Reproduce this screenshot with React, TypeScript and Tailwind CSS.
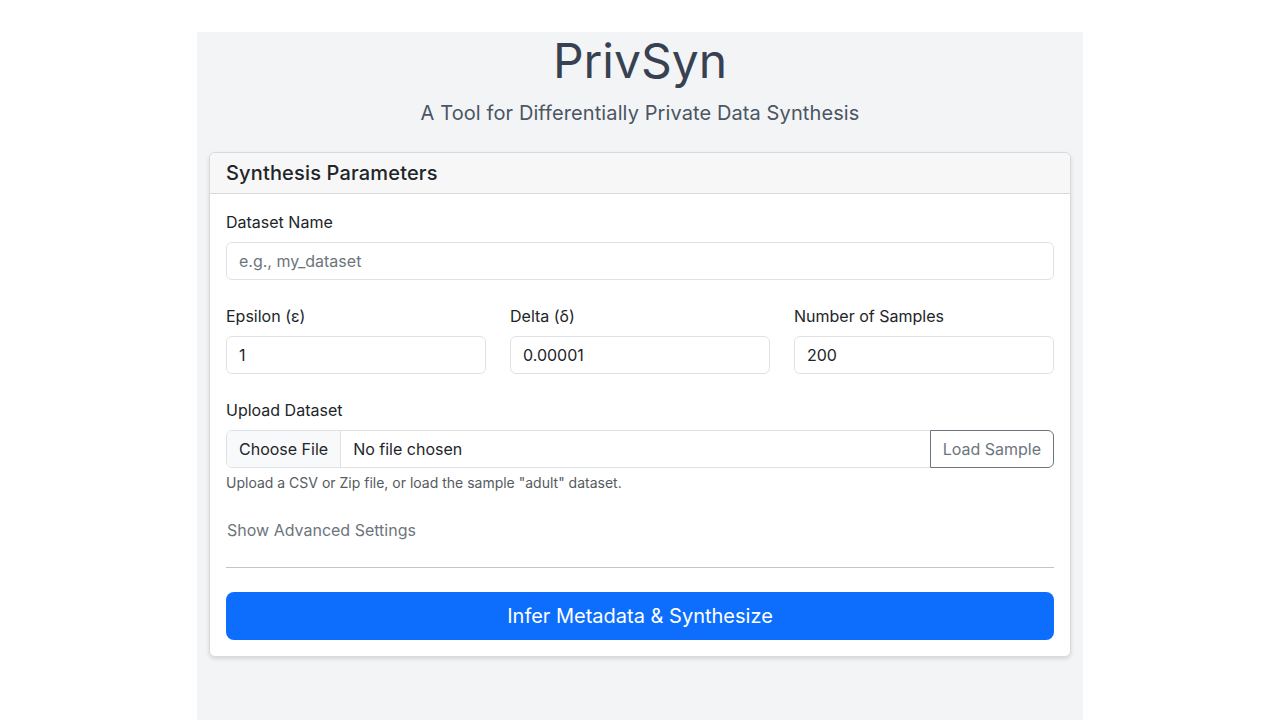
import React, { useState } from 'react';

const inputCls =
  'block w-full h-[38px] px-3 rounded-md border border-[#dee2e6] bg-white text-[16px] text-[#212529] placeholder:text-[#6c757d] outline-none';

export default function App() {
  const [name, setName] = useState('');
  const [epsilon, setEpsilon] = useState('1');
  const [delta, setDelta] = useState('0.00001');
  const [samples, setSamples] = useState('200');

  return (
    <div className="bg-white min-h-screen" style={{ fontFamily: 'Inter, "Noto Sans", sans-serif' }}>
      <div className="mx-auto mt-8 w-[886px] min-h-[688px] bg-[#f3f4f6] px-3">
        <h1 className="text-center text-[48px] leading-[1.2] font-normal text-[#374151] mb-2">PrivSyn</h1>
        <p className="text-center text-[20px] leading-[1.5] tracking-[0.005em] text-[#4b5563] mb-6">
          A Tool for Differentially Private Data Synthesis
        </p>

        <div className="bg-white border border-[#d9d9d9] rounded-md shadow-[0_2px_4px_rgba(0,0,0,0.12)]">
          <div className="px-4 py-2 bg-[#f7f7f7] border-b border-[#d9d9d9] rounded-t-md">
            <h2 className="text-[20px] leading-[1.2] font-medium tracking-[0.008em] text-[#212529]">
              Synthesis Parameters
            </h2>
          </div>

          <div className="p-4 text-[#212529]">
            <div className="mb-6">
              <label className="block text-[16px] leading-6 mb-2">Dataset Name</label>
              <input
                className={inputCls}
                placeholder="e.g., my_dataset"
                value={name}
                onChange={(e) => setName(e.target.value)}
              />
            </div>

            <div className="grid grid-cols-3 gap-6 mb-6">
              <div>
                <label className="block text-[16px] leading-6 mb-2">Epsilon (ε)</label>
                <input className={inputCls} value={epsilon} onChange={(e) => setEpsilon(e.target.value)} />
              </div>
              <div>
                <label className="block text-[16px] leading-6 mb-2">Delta (δ)</label>
                <input className={inputCls} value={delta} onChange={(e) => setDelta(e.target.value)} />
              </div>
              <div>
                <label className="block text-[16px] leading-6 mb-2">Number of Samples</label>
                <input className={inputCls} value={samples} onChange={(e) => setSamples(e.target.value)} />
              </div>
            </div>

            <div className="mb-6">
              <label className="block text-[16px] leading-6 mb-2">Upload Dataset</label>
              <div className="flex h-[38px]">
                <div className="flex flex-1 items-stretch border border-[#dee2e6] rounded-l-md overflow-hidden">
                  <span className="flex items-center px-3 bg-[#f8f9fa] border-r border-[#dee2e6] text-[16px]">
                    Choose File
                  </span>
                  <span className="flex items-center px-3 text-[16px]">No file chosen</span>
                </div>
                <button className="-ml-px px-3 border border-[#6c757d] rounded-r-md text-[16px] text-[#6c757d] bg-white">
                  Load Sample
                </button>
              </div>
              <p className="mt-1 text-[14px] leading-[21px] text-[#555b61]">
                Upload a CSV or Zip file, or load the sample "adult" dataset.
              </p>
            </div>

            <div className="pt-px">
              <button className="block text-[16px] leading-6 text-[#6c757d] pl-px">Show Advanced Settings</button>
            </div>

            <hr className="mt-[25px] mb-6 border-0 border-t border-[#c4c4c4]" />

            <button className="w-full h-12 rounded-lg bg-[#0d6efd] text-white text-[20px] leading-[1.5]">
              Infer Metadata &amp; Synthesize
            </button>
          </div>
        </div>
      </div>
    </div>
  );
}
